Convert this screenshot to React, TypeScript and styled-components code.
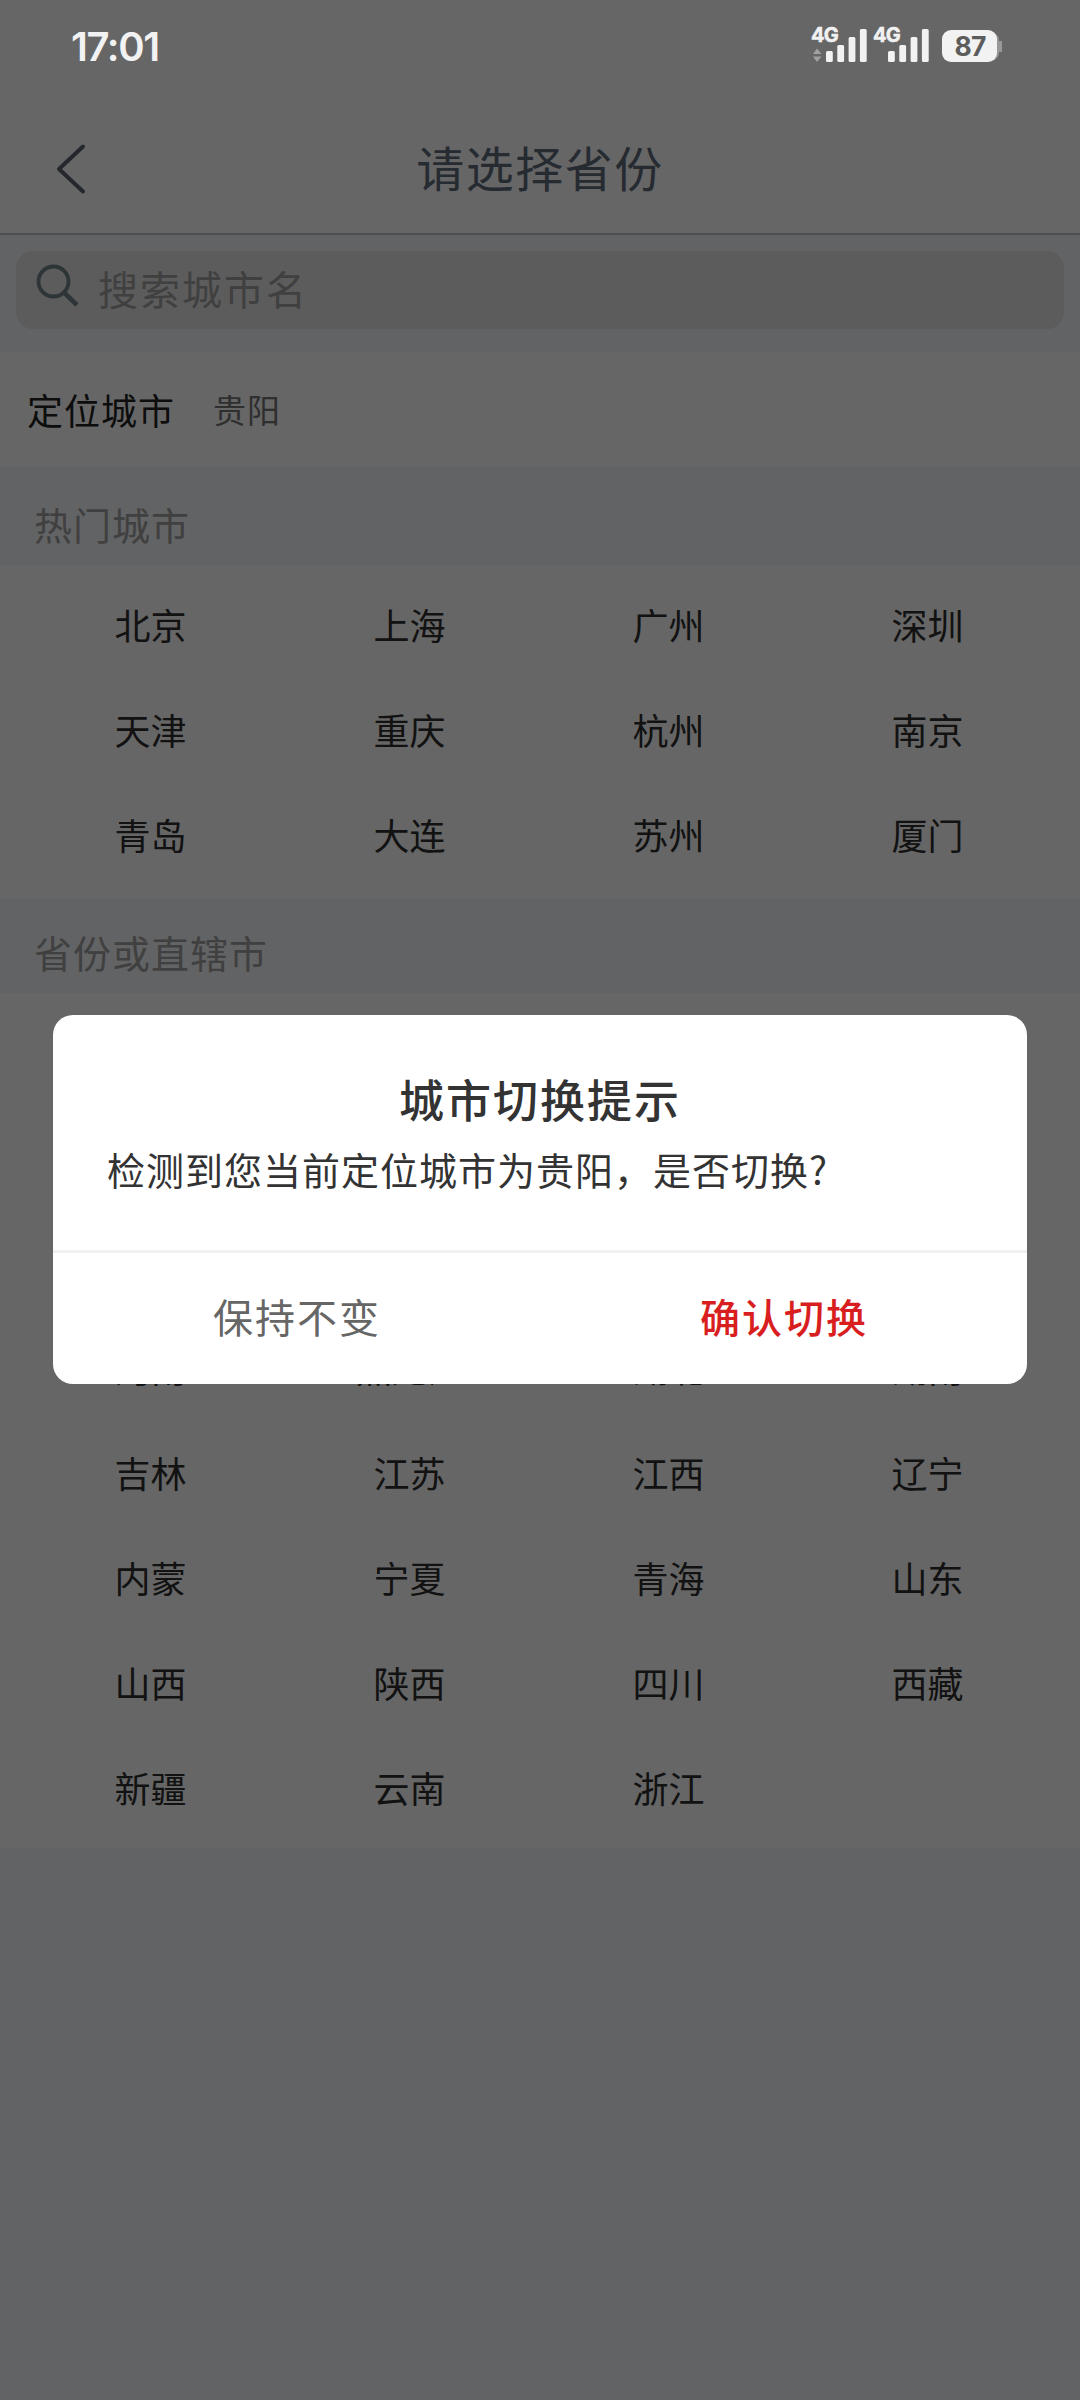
import React from "react";
import styled, { createGlobalStyle } from "styled-components";

const GlobalStyle = createGlobalStyle`
  * { box-sizing: border-box; }
  body { margin: 0; background: #626365; }
  button { font: inherit; border: 0; background: none; padding: 0; }
`;

const Screen = styled.div`
  position: relative;
  width: 1080px;
  height: 2400px;
  overflow: hidden;
  background: #f6f7fa;
  font-family: "Noto Sans CJK SC", sans-serif;
  display: flex;
  flex-direction: column;
`;

const StatusSpace = styled.div`
  height: 102px;
  flex: none;
  background: #fff;
`;

const Header = styled.header`
  height: 133px;
  flex: none;
  background: #fff;
  border-bottom: 2px solid #c4c6c9;
  display: grid;
  grid-template-columns: 140px 1fr 140px;
  align-items: center;
`;

const BackIcon = styled.svg`
  width: 34px;
  height: 52px;
  margin: 2px 0 0 55px;
`;

const Title = styled.h1`
  margin: 0;
  padding-bottom: 4px;
  text-align: center;
  font-size: 48px;
  font-weight: 400;
  letter-spacing: 1.5px;
  line-height: 60px;
  color: #606a7a;
`;

const SearchArea = styled.div`
  height: 117px;
  flex: none;
  padding: 16px 16px 23px;
`;

const SearchBox = styled.div`
  height: 78px;
  border-radius: 17px;
  background: #e6e6e8;
  display: flex;
  align-items: center;
  gap: 17px;
  padding-left: 19px;
`;

const SearchIcon = styled.svg`
  width: 46px;
  height: 46px;
  margin-bottom: 8px;
`;

const Placeholder = styled.span`
  padding-bottom: 4px;
  font-size: 40px;
  letter-spacing: 2px;
  line-height: 60px;
  color: #a0a0a0;
`;

const LocationRow = styled.div`
  height: 115px;
  flex: none;
  background: #fff;
  display: flex;
  align-items: center;
  gap: 38px;
  padding: 0 0 2px 27px;
`;

const LocationLabel = styled.span`
  font-size: 36px;
  letter-spacing: 1px;
  color: #222;
`;

const LocationCity = styled.span`
  font-size: 33px;
  letter-spacing: 1px;
  color: #777;
`;

const SectionTitle = styled.h2<{ $height: number }>`
  margin: 0;
  height: ${(p) => p.$height}px;
  flex: none;
  padding: 0 0 12px 34px;
  display: flex;
  align-items: flex-end;
  font-size: 38px;
  font-weight: 400;
  line-height: 58px;
  letter-spacing: 1px;
  color: #a0a0a0;
`;

const CityGrid = styled.div<{ $top: number; $bottom: number }>`
  flex: none;
  background: #fff;
  padding: ${(p) => p.$top}px 23px ${(p) => p.$bottom}px 21px;
  display: grid;
  grid-template-columns: repeat(4, 259px);
  grid-auto-rows: 105px;
`;

const City = styled.div`
  display: flex;
  align-items: center;
  justify-content: center;
  font-size: 36px;
  color: #2e2e2e;
`;

const Mask = styled.div`
  position: absolute;
  inset: 0;
  background: rgba(0, 0, 0, 0.6);
  display: flex;
  flex-direction: column;
  align-items: center;
`;

const StatusBar = styled.div`
  width: 100%;
  height: 92px;
  flex: none;
  padding: 0 77px 0 71px;
  display: flex;
  align-items: center;
  justify-content: space-between;
`;

const Clock = styled.span`
  font-family: Inter, sans-serif;
  font-size: 40px;
  font-weight: 600;
  letter-spacing: -1.4px;
  color: #f2f2f2;
`;

const StatusIcons = styled.svg`
  width: 194px;
  height: 60px;
  font-family: Inter, sans-serif;
  font-weight: 700;
`;

const Dialog = styled.section`
  width: 974px;
  height: 369px;
  margin-top: 923px;
  border-radius: 20px;
  overflow: hidden;
  background: #fff;
  display: flex;
  flex-direction: column;
`;

const DialogBody = styled.div`
  height: 238px;
  flex: none;
  padding: 52px 54px 0;
  border-bottom: 3px solid #f1f1f1;
`;

const DialogTitle = styled.h3`
  margin: 0;
  text-align: center;
  font-size: 45px;
  font-weight: 500;
  letter-spacing: 2px;
  line-height: 64px;
  color: #333;
`;

const DialogText = styled.p`
  margin: 8px 0 0;
  font-size: 38px;
  letter-spacing: 1px;
  line-height: 60px;
  white-space: nowrap;
  color: #333;
`;

const Actions = styled.div`
  flex: 1;
  display: grid;
  grid-template-columns: 1fr 1fr;
`;

const Action = styled.button<{ $primary?: boolean }>`
  padding: 0 0 5px 1px;
  font-size: 40px;
  letter-spacing: 2px;
  font-weight: ${(p) => (p.$primary ? 500 : 400)};
  color: ${(p) => (p.$primary ? "#d81e1e" : "#666")};
`;

const hotCities = ["北京", "上海", "广州", "深圳", "天津", "重庆", "杭州", "南京", "青岛", "大连", "苏州", "厦门"];

const provinces = [
  "北京", "上海", "天津", "重庆",
  "安徽", "福建", "甘肃", "广东",
  "广西", "贵州", "海南", "河北",
  "河南", "黑龙江", "湖北", "湖南",
  "吉林", "江苏", "江西", "辽宁",
  "内蒙", "宁夏", "青海", "山东",
  "山西", "陕西", "四川", "西藏",
  "新疆", "云南", "浙江",
];

const signalBars = [
  { x: 0, h: 11 },
  { x: 11.3, h: 17 },
  { x: 22.6, h: 25 },
  { x: 33.9, h: 33 },
];

function Signal({ x }: { x: number }) {
  return (
    <g transform={`translate(${x} 0)`} fill="#f2f2f2">
      <text x="-15" y="26" fontSize="20" letterSpacing="-0.9" stroke="#f2f2f2" strokeWidth="0.5">4G</text>
      {signalBars.map((b) => (
        <rect key={b.x} x={b.x} y={46 - b.h} width="6.8" height={b.h} rx="1.5" />
      ))}
    </g>
  );
}

export default function App() {
  return (
    <Screen>
      <GlobalStyle />
      <StatusSpace />
      <Header>
        <BackIcon viewBox="0 0 34 52" fill="none" stroke="#5a6470" strokeWidth="4" strokeLinecap="round" strokeLinejoin="round">
          <path d="M28 3.5 L4 26 L28 48.5" />
        </BackIcon>
        <Title>请选择省份</Title>
      </Header>
      <SearchArea>
        <SearchBox>
          <SearchIcon viewBox="0 0 46 46" fill="none" stroke="#74848a" strokeWidth="3.8">
            <circle cx="18.5" cy="18.5" r="15" />
            <path d="M29 29.5 L42 42" strokeWidth="4.6" />
          </SearchIcon>
          <Placeholder>搜索城市名</Placeholder>
        </SearchBox>
      </SearchArea>
      <LocationRow>
        <LocationLabel>定位城市</LocationLabel>
        <LocationCity>贵阳</LocationCity>
      </LocationRow>
      <SectionTitle $height={98}>热门城市</SectionTitle>
      <CityGrid $top={6} $bottom={13}>
        {hotCities.map((c) => <City key={c}>{c}</City>)}
      </CityGrid>
      <SectionTitle $height={94}>省份或直辖市</SectionTitle>
      <CityGrid $top={6} $bottom={9}>
        {provinces.map((c) => <City key={c}>{c}</City>)}
      </CityGrid>
      <Mask>
        <StatusBar>
          <Clock>17:01</Clock>
          <StatusIcons viewBox="0 0 194 60">
            <Signal x={17} />
            <path d="M4 38 L8 32.5 L12.5 38 Z M4 40.5 L8 46 L12.5 40.5 Z" fill="#a0a0a0" />
            <Signal x={79} />
            <path d="M184 16 q6 3 6 9 h3 v11 h-3 q0 6 -6 9 z" fill="#989898" />
            <rect x="133" y="14" width="55" height="32" rx="9" fill="#f2f2f2" />
            <text x="161" y="39.5" textAnchor="middle" fontSize="26.5" letterSpacing="-0.8" fill="#5c5c5c">87</text>
          </StatusIcons>
        </StatusBar>
        <Dialog>
          <DialogBody>
            <DialogTitle>城市切换提示</DialogTitle>
            <DialogText>检测到您当前定位城市为贵阳，是否切换?</DialogText>
          </DialogBody>
          <Actions>
            <Action>保持不变</Action>
            <Action $primary>确认切换</Action>
          </Actions>
        </Dialog>
      </Mask>
    </Screen>
  );
}
